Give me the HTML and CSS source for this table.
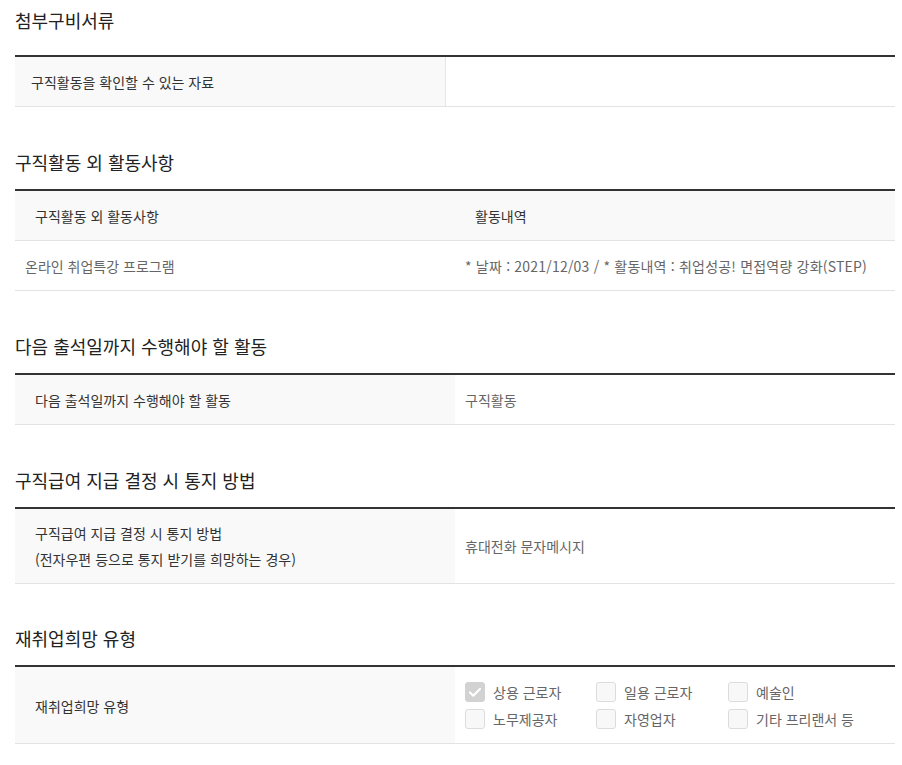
FILE: index.html
```html
<!DOCTYPE html>
<html lang="ko">
<head>
<meta charset="utf-8">
<title>구직활동</title>
<link rel="stylesheet" href="styles.css">
</head>
<body>
<div class="page">
  <section class="sec sec-first">
    <h2 class="sec-title">첨부구비서류</h2>
    <table class="tbl">
      <tr>
        <th class="th-first">구직활동을 확인할 수 있는 자료</th>
        <td></td>
      </tr>
    </table>
  </section>

  <section class="sec">
    <h2 class="sec-title">구직활동 외 활동사항</h2>
    <table class="tbl">
      <tr class="head-row">
        <th class="th-col">구직활동 외 활동사항</th>
        <th class="th-col">활동내역</th>
      </tr>
      <tr>
        <td class="td-left">온라인 취업특강 프로그램</td>
        <td class="td-wide">* 날짜 : 2021/12/03 / * 활동내역 : 취업성공! 면접역량 강화(STEP)</td>
      </tr>
    </table>
  </section>

  <section class="sec">
    <h2 class="sec-title">다음 출석일까지 수행해야 할 활동</h2>
    <table class="tbl">
      <tr>
        <th>다음 출석일까지 수행해야 할 활동</th>
        <td>구직활동</td>
      </tr>
    </table>
  </section>

  <section class="sec">
    <h2 class="sec-title">구직급여 지급 결정 시 통지 방법</h2>
    <table class="tbl">
      <tr class="row-two">
        <th>구직급여 지급 결정 시 통지 방법<br>(전자우편 등으로 통지 받기를 희망하는 경우)</th>
        <td>휴대전화 문자메시지</td>
      </tr>
    </table>
  </section>

  <section class="sec sec-last">
    <h2 class="sec-title">재취업희망 유형</h2>
    <table class="tbl">
      <tr>
        <th class="th-chk">재취업희망 유형</th>
        <td class="td-chk">
          <div class="chk-grid">
            <span class="chk"><span class="box checked"><svg viewBox="0 0 20 20" width="20" height="20"><path d="M5 10.5l3.2 3.2L15 7" fill="none" stroke="#fff" stroke-width="2.2" stroke-linecap="round" stroke-linejoin="round"/></svg></span>상용 근로자</span>
            <span class="chk"><span class="box"></span>일용 근로자</span>
            <span class="chk"><span class="box"></span>예술인</span>
            <span class="chk"><span class="box"></span>노무제공자</span>
            <span class="chk"><span class="box"></span>자영업자</span>
            <span class="chk"><span class="box"></span>기타 프리랜서 등</span>
          </div>
        </td>
      </tr>
    </table>
  </section>
</div>
</body>
</html>
```

FILE: styles.css
```css
* { box-sizing: border-box; }
html, body { margin: 0; padding: 0; background: #fff; }
body {
  font-family: "Noto Sans CJK KR", "Noto Sans", sans-serif;
  color: #333;
}
.page { padding: 7px 7px 0 15px; }
.sec { margin-top: 42px; }
.sec-first { margin-top: 0; }
.sec-last { margin-top: 41px; }
.sec-title {
  margin: 0 0 14px;
  font-size: 18px;
  line-height: 26px;
  font-weight: 400;
  color: #222;
}
.sec-first .sec-title { margin-bottom: 22px; }
.tbl {
  width: 880px;
  border-collapse: collapse;
  border-top: 2px solid #333;
  font-size: 14px;
}
.tbl th, .tbl td {
  border-bottom: 1px solid #e3e3e3;
  padding: 12px 10px 11px;
  line-height: 26px;
  text-align: left;
  vertical-align: middle;
}
.tbl th {
  width: 440px;
  background: #f9f9f9;
  font-weight: 400;
  color: #333;
  padding-left: 20px;
}
.tbl td { color: #666; }
.tbl .th-first {
  width: 430px;
  padding-left: 16px;
  border-right: 1px solid #e6e6e6;
}
.head-row .th-col { width: 440px; padding-left: 20px; }
.tbl .td-left { padding-left: 10px; }
.tbl .td-wide { letter-spacing: 0.2px; }
.row-two th, .row-two td { padding-top: 11px; padding-bottom: 11px; }
.tbl .th-chk, .tbl .td-chk { padding-top: 15px; padding-bottom: 14px; }
.chk-grid {
  display: grid;
  grid-template-columns: 131px 132px auto;
  row-gap: 7px;
}
.chk {
  display: flex;
  align-items: center;
  gap: 8px;
  height: 20px;
  line-height: 20px;
  color: #666;
}
.box {
  width: 20px;
  height: 20px;
  border: 1px solid #dcdcdc;
  border-radius: 3px;
  background: #f8f8f8;
  flex: none;
  display: flex;
}
.box.checked { background: #d2d2d2; border-color: #d2d2d2; }
.box svg { display: block; margin: -1px; }
```
